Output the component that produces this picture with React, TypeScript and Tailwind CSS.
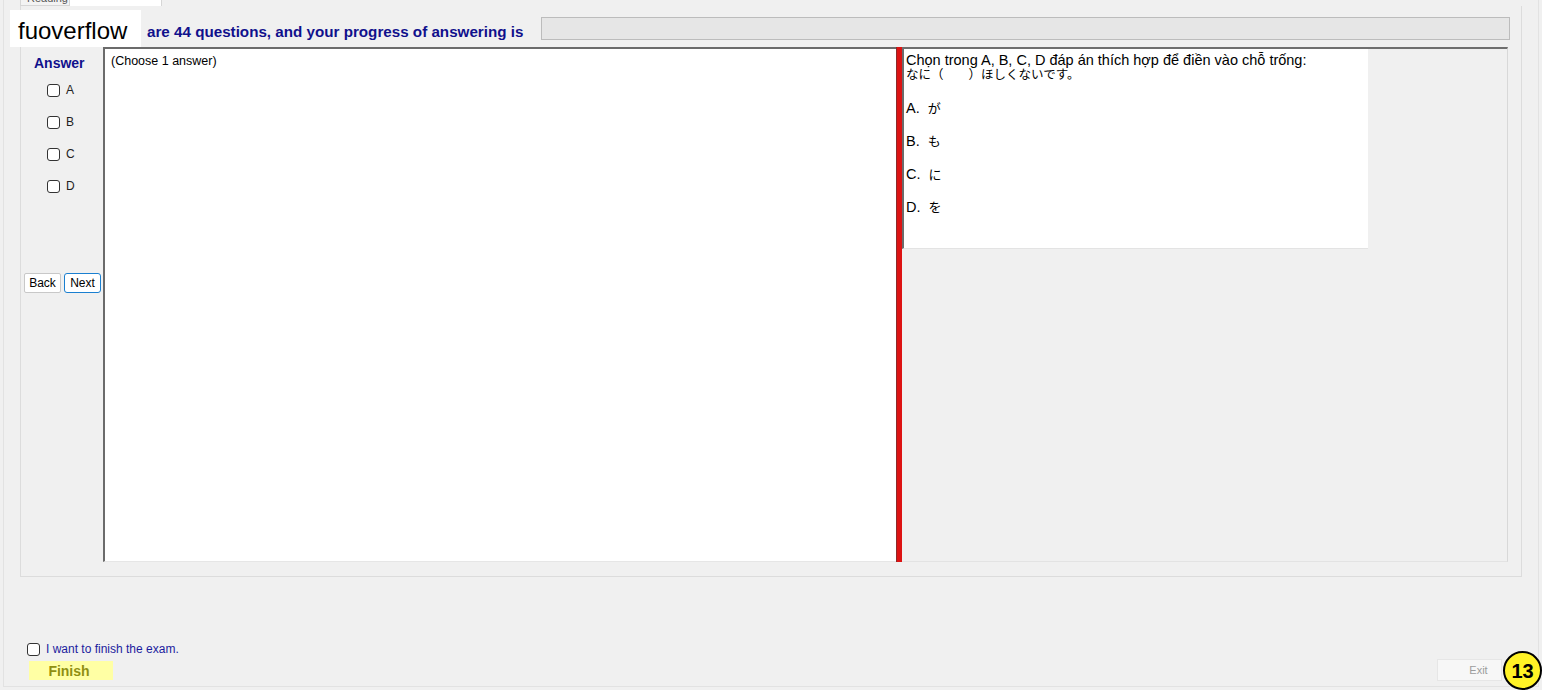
import React from 'react';

const navy = 'text-[#10108c]';

function Box() {
  return <span className="inline-block w-[13px] h-[13px] rounded-[3px] border border-[#333333] bg-white shrink-0" />;
}

const options = [
  { key: 'A', jp: 'が' },
  { key: 'B', jp: 'も' },
  { key: 'C', jp: 'に' },
  { key: 'D', jp: 'を' },
];

export default function App() {
  return (
    <div className="relative w-[1542px] h-[690px] overflow-hidden bg-[#f0f0f0] font-['Liberation_Sans','Noto_Sans_CJK_JP',sans-serif] text-black">
      {/* Window frame */}
      <div className="ml-[3px] mr-[3px] h-[687px] border-l border-r border-b border-[#e2e2e2] flex flex-col">
        {/* Tab strip (mostly scrolled off) */}
        <div className="h-[6px] flex pl-[16px] overflow-hidden">
          <div className="w-[50px] h-[6px] border border-t-0 border-[#d6d6d6] bg-[#f3f3f3] text-[11px] leading-[6px] overflow-hidden pl-[6px] text-[#555]">
            <span className="relative -top-[5px]">Reading</span>
          </div>
          <div className="w-[92px] h-[6px] border-r border-[#d6d6d6] bg-white" />
        </div>

        {/* Group box */}
        <div className="ml-[16px] mr-[16px] h-[571px] border-l border-r border-b border-[#dcdcdc] flex flex-col">
          {/* Header row */}
          <div className="mt-[11px] h-[23px] flex">
            <div className={`w-[520px] pl-[126px] pt-[6px] text-[15.2px] leading-[17px] font-bold ${navy} whitespace-nowrap`}>
              are 44 questions, and your progress of answering is
            </div>
            <div className="w-[969px] h-[23px] bg-[#e6e6e6] border border-[#bcbcbc]" />
          </div>

          {/* Main row */}
          <div className="mt-[7px] ml-[1px] w-[1486px] h-[515px] flex">
            {/* Answer column */}
            <div className="w-[81px] flex flex-col">
              <div className={`pt-[8px] pl-[12px] text-[14px] leading-[16px] font-bold ${navy}`}>Answer</div>
              <div className="mt-[3px] flex flex-col">
                {options.map((o) => (
                  <div key={o.key} className="h-[32px] flex items-center pl-[25px] gap-[6px] text-[12px] text-[#222]">
                    <Box />
                    <span>{o.key}</span>
                  </div>
                ))}
              </div>
              <div className="mt-[71px] pl-[2px] flex gap-[3px]">
                <button className="w-[37px] h-[20px] bg-white border border-[#c8c8c8] rounded-[2px] text-[12px] leading-none">
                  Back
                </button>
                <button className="w-[37px] h-[20px] bg-white border border-[#1a7fd0] rounded-[3px] text-[12px] leading-none">
                  Next
                </button>
              </div>
            </div>

            {/* Answer text box */}
            <div className="w-[793px] bg-white border-t-2 border-l-2 border-[#6b6b6b] border-b border-b-[#e6e6e6]">
              <div className="pt-[4px] pl-[6px] text-[12.5px] leading-[16px]">(Choose 1 answer)</div>
            </div>

            {/* Splitter */}
            <div className="w-[6px] bg-[#dd1313] border-l border-[#8c2a2a]" />

            {/* Question panel */}
            <div className="flex-1 border-t-2 border-[#6f6f6f] border-r border-r-[#d8d8d8] border-b border-b-[#e3e3e3]">
              <div className="w-[466px] h-[200px] bg-white border-l-2 border-[#6b6b6b] border-b border-b-[#e3e3e3] pt-[4px] pl-[2px] text-[14.5px] leading-[15px]">
                <div className="whitespace-nowrap">Chọn trong A, B, C, D đáp án thích hợp để điền vào chỗ trống:</div>
                <div className="whitespace-nowrap text-[12.5px]">なに（　　）ほしくないです。</div>
                {options.map((o) => (
                  <div key={o.key} className="mt-[18px] whitespace-nowrap">
                    {o.key}.&nbsp; <span className="text-[13px]">{o.jp}</span>
                  </div>
                ))}
              </div>
            </div>
          </div>
        </div>

        {/* Footer */}
        <div className="flex-1 flex items-end justify-between pl-[23px] pr-[36px]">
          <div className="flex flex-col mb-[6px]">
            <label className="flex items-center gap-[6px] text-[12px] text-[#1c1c9e] h-[14px]">
              <Box />
              <span>I want to finish the exam.</span>
            </label>
            <button className="mt-[5px] ml-[2px] w-[84px] h-[19px] bg-[#ffffa4] text-[14px] font-bold text-[#8f8f12] leading-none pr-[4px]">
              Finish
            </button>
          </div>
          <button className="mb-[5px] w-[65px] h-[22px] bg-[#f7f7f7] border border-[#e6e6e6] text-[11px] text-[#9c9c9c] leading-none pl-[18px]">
            Exit
          </button>
        </div>
      </div>

      {/* Watermark overlay */}
      <div className="absolute left-[10px] top-[10px] w-[131px] h-[37px] bg-white flex items-center pl-[8px] pt-[4px] text-[24px] leading-none">
        fuoverflow
      </div>

      {/* Badge */}
      <div className="absolute left-[1503px] top-[651px] w-[39px] h-[39px] rounded-full bg-[#fff226] border-2 border-black flex items-center justify-center text-[20px] font-bold leading-none">
        13
      </div>
    </div>
  );
}
